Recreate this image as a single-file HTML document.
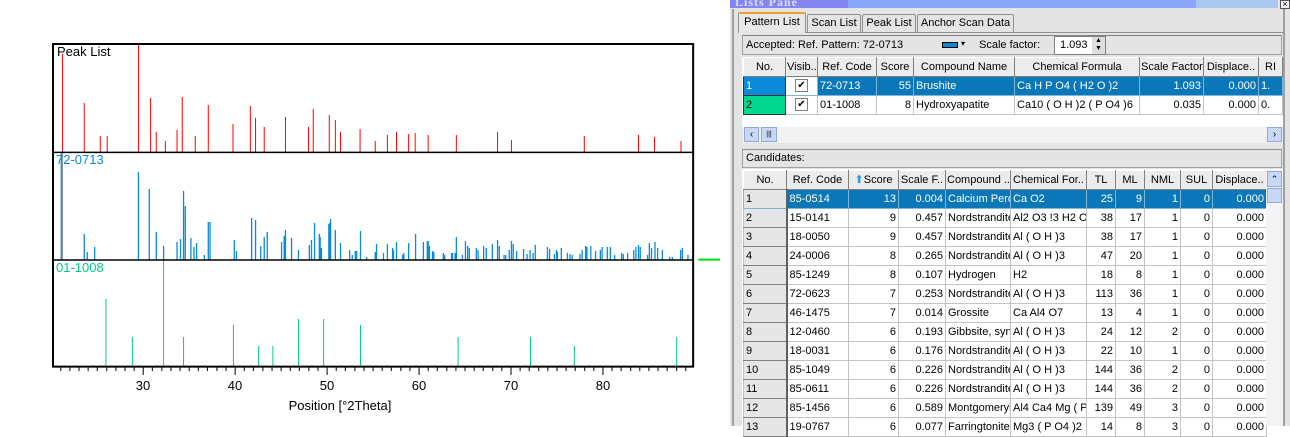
<!DOCTYPE html>
<html><head><meta charset="utf-8"><style>
*{margin:0;padding:0;box-sizing:border-box}
body{width:1290px;height:426px;overflow:hidden;background:#fff;font-family:"Liberation Sans",Arial,sans-serif;font-size:11px;color:#000;position:relative}
.a{position:absolute;white-space:nowrap}
table{border-collapse:collapse;table-layout:fixed;position:absolute}
td{border:1px solid #c4c4c4;height:19px;padding:0 2px;white-space:nowrap;overflow:hidden;font-size:11px;line-height:17px}
th{font-weight:normal;background:#ececec;border:1px solid #808080;border-top-color:#fff;border-left-color:#fff;height:19px;padding:0 1px;white-space:nowrap;overflow:hidden;font-size:11px;text-align:center;line-height:17px}
td.r{text-align:right}
td.n{background:#e6e6e6;border-right:2px solid #606060;border-bottom:1px solid #808080}
tr.s td{background:#0a78b8;color:#fff;border-color:#7fb5d6}
.tab{position:absolute;top:14px;height:18px;border:1px solid #909090;border-bottom:none;background:#e4e4e4;font-size:11px;line-height:17px;text-align:center;border-radius:2px 2px 0 0;white-space:nowrap}
.cb{display:inline-block;width:13px;height:13px;border:1px solid #808080;background:#fff;color:#000;font-size:10px;line-height:11px;text-align:center;vertical-align:middle}
</style></head><body>

<svg class="a" style="left:0;top:0" width="730" height="426">
<g transform="translate(40,30) scale(0.4337,0.3333)" fill="none">
<path vector-effect="non-scaling-stroke" stroke="#ff0000" stroke-width="1" d="M52 367V72M102 367V219M139 367V318M155 367V318M227 367V42M255 367V204M268 367V306M289 367V333M316 367V300M328 367V201M358 367V318M388 367V225M445 367V282M485 367V228M497 367V264M517 367V291M566 367V261M619 367V291M630 367V237M667 367V255M681 367V270M693 367V306M738 367V297M773 367V333M801 367V315M822 367V306M850 367V312M865 367V309M895 367V315M960 367V315M1055 367V306M1087 367V330M1255 367V318M1380 367V315M1417 367V321M1478 367V333"/>
<path vector-effect="non-scaling-stroke" stroke="#909090" stroke-width="1" d="M52 690V370M331 690V560M285 1010V690"/>
<path vector-effect="non-scaling-stroke" stroke="#0a8ad8" stroke-width="1.3" d="M49 690V370M102 690V612M109 690V666M126 690V651M227 690V426M252 690V477M268 690V606M285 690V648M316 690V636M324 690V627M331 690V483M335 690V528M348 690V624M355 690V651M361 690V639M379 690V675M388 690V576M392 690V576M448 690V630M453 690V663M488 690V564M497 690V570M509 690V648M517 690V621M524 690V606M557 690V636M563 690V618M566 690V600M580 690V624M596 690V660M621 690V645M626 690V630M633 690V579M644 690V612M646 690V621M649 690V654M666 690V582M668 690V579M670 690V567M681 690V600M693 690V639M714 690V660M720 690V675M727 690V663M730 690V663M739 690V603M753 690V681M773 690V666M776 690V642M792 690V669M801 690V642M813 690V654M815 690V660M822 690V636M836 690V675M839 690V669M850 690V639M866 690V612M884 690V636M893 690V633M895 690V633M898 690V648M905 690V663M908 690V666M930 690V669M933 690V675M949 690V669M951 690V669M957 690V669M960 690V621M974 690V675M981 690V633M986 690V648M990 690V654M1006 690V654M1010 690V660M1023 690V648M1029 690V654M1043 690V642M1055 690V630M1059 690V648M1070 690V675M1074 690V675M1082 690V660M1087 690V633M1091 690V642M1099 690V663M1115 690V657M1123 690V672M1130 690V660M1137 690V669M1142 690V645M1170 690V651M1175 690V657M1186 690V672M1191 690V660M1193 690V666M1202 690V654M1216 690V669M1222 690V672M1227 690V675M1245 690V672M1250 690V660M1258 690V648M1261 690V651M1270 690V648M1281 690V663M1292 690V660M1296 690V651M1308 690V651M1315 690V651M1325 690V675M1341 690V669M1345 690V672M1355 690V669M1369 690V660M1374 690V651M1380 690V645M1384 690V651M1401 690V675M1405 690V639M1410 690V654M1418 690V636M1424 690V654M1435 690V660M1452 690V681M1458 690V681M1477 690V660M1481 690V654M1494 690V675M1505 690V681"/>
<path vector-effect="non-scaling-stroke" stroke="#00cc88" stroke-width="1" d="M152 1010V807M213 1010V921M331 1010V921M446 1010V885M504 1010V948M537 1010V948M596 1010V867M654 1010V867M739 1010V885M964 1010V921M1131 1010V921M1232 1010V948M1468 1010V921"/>
<rect x="30" y="42" width="1476" height="968" vector-effect="non-scaling-stroke" stroke="#000" stroke-width="2"/>
<path vector-effect="non-scaling-stroke" stroke="#000" stroke-width="1.5" d="M30 367H1506M30 690H1506"/>
<path vector-effect="non-scaling-stroke" stroke="#00dd00" stroke-width="2" d="M1518 689H1568"/>
<path vector-effect="non-scaling-stroke" stroke="#000" stroke-width="1" d="M48 1010v13M69 1010v13M90 1010v13M111 1010v13M132 1010v13M154 1010v13M175 1010v13M196 1010v13M217 1010v13M238 1010v25M259 1010v13M281 1010v13M302 1010v13M323 1010v13M344 1010v13M365 1010v13M386 1010v13M408 1010v13M429 1010v13M450 1010v25M471 1010v13M492 1010v13M514 1010v13M535 1010v13M556 1010v13M577 1010v13M598 1010v13M620 1010v13M641 1010v13M662 1010v25M683 1010v13M704 1010v13M726 1010v13M747 1010v13M768 1010v13M789 1010v13M810 1010v13M832 1010v13M853 1010v13M874 1010v25M895 1010v13M916 1010v13M938 1010v13M959 1010v13M980 1010v13M1001 1010v13M1022 1010v13M1044 1010v13M1065 1010v13M1086 1010v25M1107 1010v13M1128 1010v13M1150 1010v13M1171 1010v13M1192 1010v13M1213 1010v13M1234 1010v13M1256 1010v13M1277 1010v13M1298 1010v25M1319 1010v13M1340 1010v13M1362 1010v13M1383 1010v13M1404 1010v13M1425 1010v13M1446 1010v13M1468 1010v13M1489 1010v13"/>
</g>
<g font-family="Liberation Sans,sans-serif" font-size="13">
<text x="57" y="56">Peak List</text>
<text x="56" y="164" fill="#0a8ad8">72-0713</text>
<text x="56" y="272" fill="#00cc88">01-1008</text>
<g text-anchor="middle"><text x="143" y="390">30</text><text x="235" y="390">40</text><text x="327" y="390">50</text><text x="419" y="390">60</text><text x="511" y="390">70</text><text x="603" y="390">80</text>
<text x="340" y="410">Position [°2Theta]</text></g>
</g>
</svg>

<div class="a" style="left:730px;top:0;width:560px;height:426px;background:#e4e4e4"></div>
<div class="a" style="left:730px;top:0;width:118px;height:8px;background:#8585f2"></div>
<div class="a" style="left:848px;top:0;width:348px;height:8px;background:#8aa6fa"></div>
<div class="a" style="left:1196px;top:0;width:82px;height:8px;background:#a8c8f0"></div>
<div class="a" style="left:735px;top:-5px;font:bold 12px 'Liberation Serif',serif;color:#d8e0ff;letter-spacing:1px">Lists Pane</div>
<div class="a" style="left:1280px;top:0;width:10px;height:9px;border:1px solid #555;background:#eee;font-size:9px;line-height:7px;text-align:center">×</div>
<div class="a" style="left:732px;top:9px;width:2px;height:417px;background:#a0a0a0"></div>
<div class="a" style="left:1283px;top:9px;width:2px;height:417px;background:#a0a0a0"></div>

<div class="tab" style="left:738px;width:68px;top:12px;height:21px;border-top:2px solid #f0a030;background:#e8e8e8;z-index:2">Pattern List</div>
<div class="tab" style="left:807px;width:54px">Scan List</div>
<div class="tab" style="left:862px;width:54px">Peak List</div>
<div class="tab" style="left:917px;width:97px">Anchor Scan Data</div>
<div class="a" style="left:740px;top:32px;width:544px;height:1px;background:#909090"></div>

<div class="a" style="left:742px;top:35px;width:540px;height:20px;border:1px solid #a0a0a0;border-top-color:#808080"></div>
<div class="a" style="left:746px;top:39px">Accepted: Ref. Pattern: 72-0713</div>
<div class="a" style="left:942px;top:42px;width:16px;height:6px;background:#0a88d8;border:1px solid #000"></div>
<div class="a" style="left:961px;top:39px;font-size:8px">▾</div>
<div class="a" style="left:979px;top:39px">Scale factor:</div>
<div class="a" style="left:1054px;top:36px;width:52px;height:19px;background:#fff;border:1px solid #808080"></div>
<div class="a" style="left:1060px;top:39px">1.093</div>
<div class="a" style="left:1092px;top:37px;width:13px;height:17px;background:#ddd;font-size:7px;line-height:8px;text-align:center">▲<br>▼</div>

<div class="a" style="left:742px;top:57px;width:541px;height:70px;background:#fff"></div>
<table style="left:743px;top:57px;width:539px">
<colgroup><col style="width:42px"><col style="width:32px"><col style="width:59px"><col style="width:37px"><col style="width:101px"><col style="width:125px"><col style="width:64px"><col style="width:55px"><col style="width:24px"></colgroup>
<tr><th>No.</th><th>Visib..</th><th>Ref. Code</th><th>Score</th><th>Compound Name</th><th>Chemical Formula</th><th>Scale Factor</th><th>Displace..</th><th>RI</th></tr>
<tr class="s"><td style="background:#0a8ad8;border:1px solid #333">1</td><td style="background:#fff;text-align:center;color:#000"><span class="cb">✔</span></td><td>72-0713</td><td class="r">55</td><td>Brushite</td><td>Ca H P O4 ( H2 O )2</td><td class="r">1.093</td><td class="r">0.000</td><td>1.</td></tr>
<tr><td style="background:#00d890;border:1px solid #333">2</td><td style="text-align:center"><span class="cb">✔</span></td><td>01-1008</td><td class="r">8</td><td>Hydroxyapatite</td><td>Ca10 ( O H )2 ( P O4 )6</td><td class="r">0.035</td><td class="r">0.000</td><td>0.</td></tr>
</table>
<div class="a" style="left:743px;top:127px;width:539px;height:16px;background:#f2f2f2"></div>
<div class="a" style="left:744px;top:127px;width:15px;height:15px;background:#c8d8f8;border:1px solid #90a8e0;font-size:10px;text-align:center;line-height:13px">‹</div>
<div class="a" style="left:761px;top:127px;width:16px;height:15px;background:#c8d8f8;border:1px solid #90a8e0;font-size:7px;text-align:center;line-height:13px">|||</div>
<div class="a" style="left:1267px;top:127px;width:15px;height:15px;background:#c8d8f8;border:1px solid #90a8e0;font-size:10px;text-align:center;line-height:13px">›</div>

<div class="a" style="left:742px;top:149px;width:540px;height:19px;border:1px solid #a0a0a0;border-top-color:#909090"></div>
<div class="a" style="left:746px;top:152px">Candidates:</div>

<div class="a" style="left:742px;top:169px;width:541px;height:257px;background:#fff"></div>
<table style="left:743px;top:170px;width:523px">
<colgroup><col style="width:43px"><col style="width:62px"><col style="width:50px"><col style="width:47px"><col style="width:65px"><col style="width:76px"><col style="width:29px"><col style="width:29px"><col style="width:36px"><col style="width:32px"><col style="width:54px"></colgroup>
<tr><th>No.</th><th>Ref. Code</th><th><span style="color:#2a9ad8">⬆</span>Score</th><th>Scale F..</th><th>Compound ..</th><th>Chemical For..</th><th>TL</th><th>ML</th><th>NML</th><th>SUL</th><th>Displace..</th></tr>
<tr class="s"><td class="n" style="background:#e6e6e6;color:#000;border-right:2px solid #606060">1</td><td>85-0514</td><td class="r">13</td><td class="r">0.004</td><td>Calcium Pero</td><td>Ca O2</td><td class="r">25</td><td class="r">9</td><td class="r">1</td><td class="r">0</td><td class="r">0.000</td></tr>
<tr><td class="n">2</td><td>15-0141</td><td class="r">9</td><td class="r">0.457</td><td>Nordstrandite</td><td>Al2 O3 !3 H2 O</td><td class="r">38</td><td class="r">17</td><td class="r">1</td><td class="r">0</td><td class="r">0.000</td></tr>
<tr><td class="n">3</td><td>18-0050</td><td class="r">9</td><td class="r">0.457</td><td>Nordstrandite</td><td>Al ( O H )3</td><td class="r">38</td><td class="r">17</td><td class="r">1</td><td class="r">0</td><td class="r">0.000</td></tr>
<tr><td class="n">4</td><td>24-0006</td><td class="r">8</td><td class="r">0.265</td><td>Nordstrandite</td><td>Al ( O H )3</td><td class="r">47</td><td class="r">20</td><td class="r">1</td><td class="r">0</td><td class="r">0.000</td></tr>
<tr><td class="n">5</td><td>85-1249</td><td class="r">8</td><td class="r">0.107</td><td>Hydrogen</td><td>H2</td><td class="r">18</td><td class="r">8</td><td class="r">1</td><td class="r">0</td><td class="r">0.000</td></tr>
<tr><td class="n">6</td><td>72-0623</td><td class="r">7</td><td class="r">0.253</td><td>Nordstrandite</td><td>Al ( O H )3</td><td class="r">113</td><td class="r">36</td><td class="r">1</td><td class="r">0</td><td class="r">0.000</td></tr>
<tr><td class="n">7</td><td>46-1475</td><td class="r">7</td><td class="r">0.014</td><td>Grossite</td><td>Ca Al4 O7</td><td class="r">13</td><td class="r">4</td><td class="r">1</td><td class="r">0</td><td class="r">0.000</td></tr>
<tr><td class="n">8</td><td>12-0460</td><td class="r">6</td><td class="r">0.193</td><td>Gibbsite, syn</td><td>Al ( O H )3</td><td class="r">24</td><td class="r">12</td><td class="r">2</td><td class="r">0</td><td class="r">0.000</td></tr>
<tr><td class="n">9</td><td>18-0031</td><td class="r">6</td><td class="r">0.176</td><td>Nordstrandite</td><td>Al ( O H )3</td><td class="r">22</td><td class="r">10</td><td class="r">1</td><td class="r">0</td><td class="r">0.000</td></tr>
<tr><td class="n">10</td><td>85-1049</td><td class="r">6</td><td class="r">0.226</td><td>Nordstrandite</td><td>Al ( O H )3</td><td class="r">144</td><td class="r">36</td><td class="r">2</td><td class="r">0</td><td class="r">0.000</td></tr>
<tr><td class="n">11</td><td>85-0611</td><td class="r">6</td><td class="r">0.226</td><td>Nordstrandite</td><td>Al ( O H )3</td><td class="r">144</td><td class="r">36</td><td class="r">2</td><td class="r">0</td><td class="r">0.000</td></tr>
<tr><td class="n">12</td><td>85-1456</td><td class="r">6</td><td class="r">0.589</td><td>Montgomeryit</td><td>Al4 Ca4 Mg ( P</td><td class="r">139</td><td class="r">49</td><td class="r">3</td><td class="r">0</td><td class="r">0.000</td></tr>
<tr><td class="n">13</td><td>19-0767</td><td class="r">6</td><td class="r">0.077</td><td>Farringtonite</td><td>Mg3 ( P O4 )2</td><td class="r">14</td><td class="r">8</td><td class="r">3</td><td class="r">0</td><td class="r">0.000</td></tr>
</table>
<div class="a" style="left:1266px;top:170px;width:17px;height:256px;background:#f4f4f6"></div>
<div class="a" style="left:1267px;top:171px;width:15px;height:16px;background:#c8d8f8;border:1px solid #90a8e0;font-size:9px;text-align:center;line-height:14px">⌃</div>
<div class="a" style="left:1267px;top:188px;width:15px;height:15px;background:#c8d8f8;border:1px solid #90a8e0"></div>
</body></html>
